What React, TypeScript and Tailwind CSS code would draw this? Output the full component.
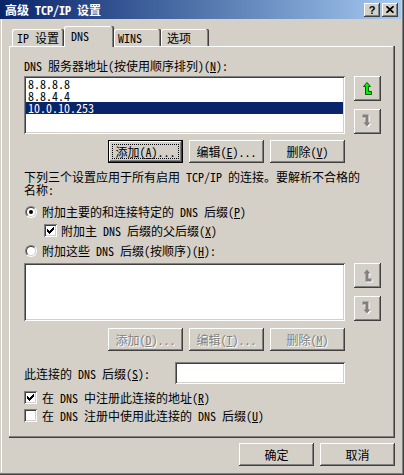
import React from "react";
import clsx from "clsx";

// classic win2k bevels
const raised =
  "shadow-[inset_-1px_-1px_0_#404040,inset_1px_1px_0_#ffffff,inset_-2px_-2px_0_#808080]";
const raisedDefault =
  "shadow-[inset_0_0_0_1px_#000000,inset_-2px_-2px_0_#404040,inset_2px_2px_0_#ffffff,inset_-3px_-3px_0_#808080]";
const sunken =
  "shadow-[inset_1px_1px_0_#808080,inset_-1px_-1px_0_#ffffff,inset_2px_2px_0_#404040,inset_-2px_-2px_0_#d4d0c8]";

const CHECK_ROWS: number[][] = [
  [6],
  [5, 6],
  [0, 4, 5, 6],
  [0, 1, 3, 4, 5],
  [0, 1, 2, 3, 4],
  [1, 2, 3],
  [2],
];

function CheckMark() {
  return (
    <svg width="7" height="7" viewBox="0 0 7 7" shapeRendering="crispEdges">
      {CHECK_ROWS.map((row, y) =>
        row.map((x) => <rect key={`${x}-${y}`} x={x} y={y} width="1" height="1" fill="#000" />)
      )}
    </svg>
  );
}

function Check({ checked }: { checked: boolean }) {
  return (
    <span className={clsx("w-[13px] h-[13px] shrink-0 bg-white flex items-center justify-center", sunken)}>
      {checked && <CheckMark />}
    </span>
  );
}

function Radio({ checked }: { checked: boolean }) {
  return (
    <span className="w-[12px] h-[12px] shrink-0 rounded-full border border-t-[#808080] border-l-[#808080] border-r-white border-b-white flex">
      <span className="flex-1 rounded-full border border-t-[#404040] border-l-[#404040] border-r-[#d4d0c8] border-b-[#d4d0c8] bg-white flex items-center justify-center">
        {checked && <span className="w-[4px] h-[4px] rounded-full bg-black" />}
      </span>
    </span>
  );
}

const DOWN_PTS = "0,0 6,0 6,8 8,8 4.5,12 1,8 3,8 3,3 0,3";
const UP_PTS = "9,13 3,13 3,5 1,5 4.5,1 8,5 6,5 6,10 9,10";

function Arrow({ dir, enabled }: { dir: "up" | "down"; enabled: boolean }) {
  const pts = dir === "up" ? UP_PTS : DOWN_PTS;
  return (
    <svg width="11" height="15" viewBox="0 0 11 15">
      {enabled ? (
        <polygon points={pts} transform="translate(0.5 0.5)" fill="#00f000" stroke="#005a00" strokeWidth="1" strokeLinejoin="miter" />
      ) : (
        <>
          <polygon points={pts} transform="translate(1.5 1.5)" fill="#ffffff" />
          <polygon points={pts} transform="translate(0.5 0.5)" fill="#808080" />
        </>
      )}
    </svg>
  );
}

function ArrowButton({ dir, enabled }: { dir: "up" | "down"; enabled: boolean }) {
  return (
    <div className={clsx("w-[27px] h-[25px] bg-[#d4d0c8] flex items-center justify-center", raised)}>
      <Arrow dir={dir} enabled={enabled} />
    </div>
  );
}

function Button({
  children,
  disabled = false,
  isDefault = false,
}: {
  children: React.ReactNode;
  disabled?: boolean;
  isDefault?: boolean;
}) {
  return (
    <div
      className={clsx(
        "relative w-[75px] h-[23px] shrink-0 bg-[#d4d0c8] flex items-center justify-center whitespace-nowrap",
        isDefault ? raisedDefault : raised,
        disabled && "text-[#808080] [text-shadow:1px_1px_0_#ffffff]"
      )}
    >
      {children}
      {isDefault && <span className="absolute left-[4px] right-[4px] top-[4px] bottom-[4px] border border-dotted border-black" />}
    </div>
  );
}

function ListBox({ items, selected }: { items: string[]; selected?: number }) {
  return (
    <div className={clsx("w-[321px] h-[58px] bg-white p-[2px]", sunken)}>
      {items.map((it, i) => (
        <div
          key={it}
          className={clsx("h-[12px] leading-[12px] pl-[2px]", i === selected && "bg-[#0a246a] text-white")}
        >
          {it}
        </div>
      ))}
    </div>
  );
}

function CaptionButton({ children }: { children: React.ReactNode }) {
  return (
    <div className={clsx("w-[16px] h-[14px] bg-[#d4d0c8] flex items-center justify-center", raised)}>
      {children}
    </div>
  );
}

const tabBase =
  "bg-[#d4d0c8] rounded-t-[2px] whitespace-nowrap shadow-[inset_-1px_0_0_#404040,inset_-2px_0_0_#808080,inset_1px_1px_0_#ffffff]";

export default function App() {
  return (
    <div className="w-[404px] h-[475px] overflow-hidden bg-[#d4d0c8] text-black text-[12px] leading-[13px] font-['Noto_Sans_Mono_CJK_SC','Noto_Sans_CJK_SC',sans-serif] border-r border-b border-[#404040]">
      <div className="h-full flex flex-col border-r border-b border-[#808080] pr-px pb-px">
        {/* title bar */}
        <div className="h-[19px] shrink-0 flex items-center pl-[5px] pr-[3px] bg-linear-to-r from-[#0a246a] to-[#a6caf0]">
          <span className="font-bold text-white whitespace-nowrap">高级 TCP/IP 设置</span>
          <div className="ml-auto flex gap-[2px]">
            <CaptionButton>
              <span className="font-['Liberation_Sans',sans-serif] font-bold text-[11px] leading-[11px] mt-px">?</span>
            </CaptionButton>
            <CaptionButton>
              <svg width="8" height="7" viewBox="0 0 8 7">
                <path d="M0.5 0.2 L7.5 6.8 M7.5 0.2 L0.5 6.8" stroke="#000" strokeWidth="1.7" />
              </svg>
            </CaptionButton>
          </div>
        </div>

        <div className="flex-1 flex flex-col shadow-[inset_1px_0_0_#d4d0c8,inset_2px_0_0_#ffffff]">
          {/* tabs */}
          <div className="mt-[7px] h-[20px] flex items-end pl-[12px]">
            <div className={clsx(tabBase, "w-[52px] h-[17px] flex items-center pl-[5px]")}>IP 设置</div>
            <div className={clsx(tabBase, "relative z-10 w-[50px] h-[21px] -mb-px pt-[3px] pl-[7px]")}>DNS</div>
            <div className={clsx(tabBase, "w-[47px] h-[17px] flex items-center pl-[4px]")}>WINS</div>
            <div className={clsx(tabBase, "w-[48px] h-[17px] flex items-center pl-[6px]")}>选项</div>
          </div>

          {/* tab panel */}
          <div className="ml-[9px] w-[386px] h-[392px] shrink-0 pt-[13px] pl-[15px] flex flex-col shadow-[inset_-1px_-1px_0_#404040,inset_-2px_-2px_0_#808080,inset_1px_1px_0_#ffffff]">
            <div className="h-[13px] whitespace-nowrap">
              DNS 服务器地址(按使用顺序排列)(<u>N</u>):
            </div>

            <div className="mt-[4px] flex">
              <ListBox items={["8.8.8.8", "8.8.4.4", "10.0.10.253"]} selected={2} />
              <div className="ml-[9px] h-[58px] flex flex-col justify-between">
                <ArrowButton dir="up" enabled />
                <ArrowButton dir="down" enabled={false} />
              </div>
            </div>

            <div className="mt-[6px] w-[321px] flex justify-end gap-[6px]">
              <Button isDefault>
                添加(<u>A</u>)...
              </Button>
              <Button>
                编辑(<u>E</u>)...
              </Button>
              <Button>
                删除(<u>V</u>)
              </Button>
            </div>

            <p className="mt-[7px] whitespace-nowrap">
              下列三个设置应用于所有启用 TCP/IP 的连接。要解析不合格的
              <br />
              名称:
            </p>

            <div className="mt-[9px] h-[13px] flex items-center gap-[5px] pl-px whitespace-nowrap">
              <Radio checked />
              <span>
                附加主要的和连接特定的 DNS 后缀(<u>P</u>)
              </span>
            </div>

            <div className="mt-[6px] ml-[20px] h-[13px] flex items-center gap-[4px] whitespace-nowrap">
              <Check checked />
              <span>
                附加主 DNS 后缀的父后缀(<u>X</u>)
              </span>
            </div>

            <div className="mt-[7px] h-[13px] flex items-center gap-[5px] pl-px whitespace-nowrap">
              <Radio checked={false} />
              <span>
                附加这些 DNS 后缀(按顺序)(<u>H</u>):
              </span>
            </div>

            <div className="mt-[6px] flex">
              <ListBox items={[]} />
              <div className="ml-[9px] h-[58px] flex flex-col justify-between">
                <ArrowButton dir="up" enabled={false} />
                <ArrowButton dir="down" enabled={false} />
              </div>
            </div>

            <div className="mt-[7px] w-[321px] flex justify-end gap-[6px]">
              <Button disabled>
                添加(<u>D</u>)...
              </Button>
              <Button disabled>
                编辑(<u>T</u>)...
              </Button>
              <Button disabled>
                删除(<u>M</u>)
              </Button>
            </div>

            <div className="mt-[11px] w-[321px] h-[22px] flex items-center whitespace-nowrap">
              <span>
                此连接的 DNS 后缀(<u>S</u>):
              </span>
              <div className={clsx("ml-auto w-[170px] h-[22px] bg-white", sunken)} />
            </div>

            <div className="mt-[7px] h-[13px] flex items-center gap-[5px] whitespace-nowrap">
              <Check checked />
              <span>
                在 DNS 中注册此连接的地址(<u>R</u>)
              </span>
            </div>

            <div className="mt-[5px] h-[13px] flex items-center gap-[5px] whitespace-nowrap">
              <Check checked={false} />
              <span>
                在 DNS 注册中使用此连接的 DNS 后缀(<u>U</u>)
              </span>
            </div>
          </div>

          {/* dialog buttons */}
          <div className="mt-[5px] ml-[9px] w-[386px] flex justify-end gap-[6px]">
            <Button>确定</Button>
            <Button>取消</Button>
          </div>
        </div>
      </div>
    </div>
  );
}
